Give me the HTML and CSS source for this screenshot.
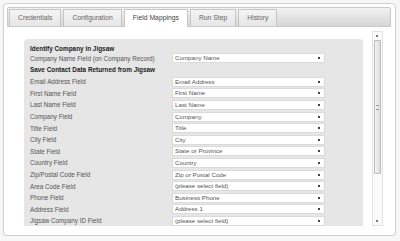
FILE: index.html
```html
<!DOCTYPE html>
<html lang="en">
<head>
  <meta charset="UTF-8">
  <title>Field Mappings</title>
  <link rel="stylesheet" href="styles.css">
</head>
<body>
  <div class="frame">
    <!-- Onglets -->
    <div class="tabbar">
      <div class="tab">Credentials</div>
      <div class="tab">Configuration</div>
      <div class="tab active">Field Mappings</div>
      <div class="tab">Run Step</div>
      <div class="tab">History</div>
    </div>

    <div class="view">
      <div class="scroll">
        <div class="panel">
          <div class="head first">Identify Company in Jigsaw</div>
          <div class="row company">
            <span class="label">Company Name Field (on Company Record)</span>
            <div class="pick">Company Name</div>
          </div>
          <div class="head second">Save Contact Data Returned from Jigsaw</div>
          <div class="row"><span class="label">Email Address Field</span><div class="pick">Email Address</div></div>
          <div class="row"><span class="label">First Name Field</span><div class="pick">First Name</div></div>
          <div class="row"><span class="label">Last Name Field</span><div class="pick">Last Name</div></div>
          <div class="row"><span class="label">Company Field</span><div class="pick">Company</div></div>
          <div class="row"><span class="label">Title Field</span><div class="pick">Title</div></div>
          <div class="row"><span class="label">City Field</span><div class="pick">City</div></div>
          <div class="row"><span class="label">State Field</span><div class="pick">State or Province</div></div>
          <div class="row"><span class="label">Country Field</span><div class="pick">Country</div></div>
          <div class="row"><span class="label">Zip/Postal Code Field</span><div class="pick">Zip or Postal Code</div></div>
          <div class="row"><span class="label">Area Code Field</span><div class="pick">(please select field)</div></div>
          <div class="row"><span class="label">Phone Field</span><div class="pick">Business Phone</div></div>
          <div class="row"><span class="label">Address Field</span><div class="pick">Address 1</div></div>
          <div class="row"><span class="label">Jigsaw Company ID Field</span><div class="pick">(please select field)</div></div>
        </div>
      </div>

      <!-- Barre de défilement -->
      <div class="scrollbar">
        <div class="arrow up"></div>
        <div class="thumb"><span class="grip"></span></div>
        <div class="track"></div>
        <div class="arrow down"></div>
      </div>
    </div>
  </div>
</body>
</html>
```

FILE: styles.css
```css
/* Fenêtre de configuration, thème gris clair */
body {
  margin: 0;
  background-color: #f7f7f7;
  font-family: "Liberation Sans", Arial, sans-serif;
  color: #555;
}
.frame {
  margin: 3px 4px 0 3px;
  height: 225px;
  padding: 3px;
  background-color: #fff;
  border: 1px solid #d2d2d2;
  border-radius: 4px;
  box-shadow: 0 1px 2px rgba(0,0,0,0.08);
}
.tabbar {
  height: 18px;
  display: flex;
  align-items: flex-end;
  gap: 2px;
  padding-left: 1px;
  margin-right: 1px;
  border: 1px solid #cacaca;
  border-radius: 2px 2px 0 0;
  background: linear-gradient(#f2f2f2, #d6d6d6);
}
.tab {
  height: 16px;
  line-height: 16px;
  padding: 0 8px;
  font-size: 6.8px;
  color: #666;
  background: linear-gradient(#f4f4f4, #e6e6e6);
  border: 1px solid #c6c6c6;
  border-bottom: 0;
}
.tab.active {
  background: #fff;
  color: #444;
  height: 17px;
  margin-bottom: -1px;
}
.view {
  display: flex;
  height: 199px;
}
.scroll {
  flex: 1;
  overflow: hidden;
  padding: 12px 6px 0 17px;
}
.panel {
  background-color: #e6e6e6;
  border-radius: 4px 4px 0 0;
  padding: 5px 6px 0 6px;
  font-size: 6.3px;
}
.head {
  font-weight: bold;
  color: #222;
  font-size: 6.4px;
}
.head.first {
  height: 9px;
  line-height: 9px;
}
.head.second {
  height: 12px;
  line-height: 12px;
  margin-top: 1px;
}
.row {
  display: flex;
  align-items: center;
  height: 11.6px;
}
.row.company {
  height: 10px;
}
.label {
  width: 142px;
  color: #555;
}
.pick {
  position: relative;
  width: 149px;
  height: 8px;
  line-height: 8px;
  padding-left: 2px;
  background-color: #fff;
  border: 1px solid #dadada;
  color: #555;
  font-size: 6.2px;
}
.pick::after {
  content: "";
  position: absolute;
  right: 4px;
  top: 3px;
  width: 2px;
  height: 2px;
  background-color: #444;
}
.scrollbar {
  width: 9px;
  margin: 4px 9px 0 3px;
  display: flex;
  flex-direction: column;
  border: 1px solid #e3e3e3;
  background-color: #fafafa;
}
.arrow {
  height: 8px;
  position: relative;
}
.arrow::after {
  content: "";
  position: absolute;
  left: 3px;
  top: 3px;
  width: 2px;
  height: 2px;
  background-color: #777;
}
.thumb {
  height: 132px;
  margin: 0 1px;
  border: 1px solid #bdbdbd;
  border-radius: 1px;
  background: linear-gradient(90deg, #f3f3f3, #dcdcdc);
  display: flex;
  align-items: center;
  justify-content: center;
}
.grip {
  width: 3px;
  height: 3px;
  border-top: 1px solid #999;
  border-bottom: 1px solid #999;
}
.track {
  flex: 1;
}
```
